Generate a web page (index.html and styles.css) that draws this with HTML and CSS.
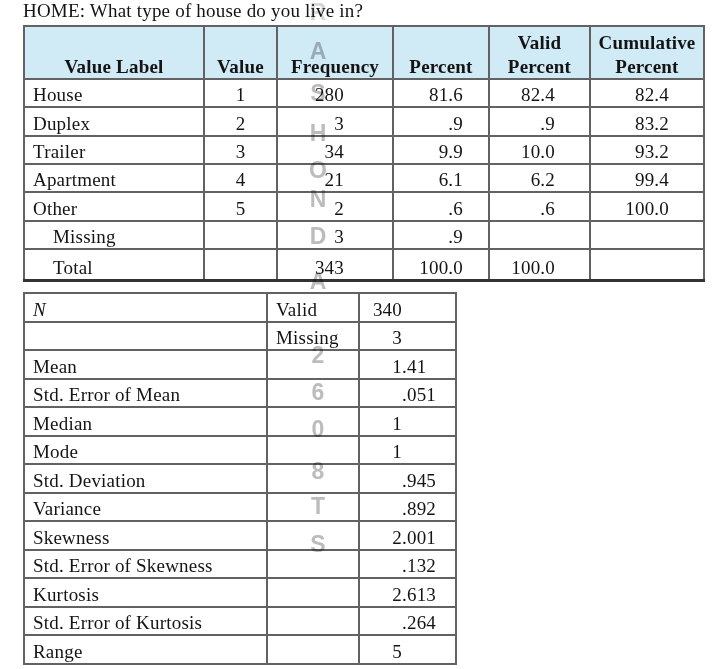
FILE: index.html
```html
<!DOCTYPE html>
<html>
<head>
<meta charset="utf-8">
<title>HOME frequencies</title>
<link rel="stylesheet" href="styles.css">
</head>
<body>
<div class="page">
  <div class="title">HOME: What type of house do you live in?</div>

  <table class="freq">
    <colgroup>
      <col class="f1"><col class="f2"><col class="f3"><col class="f4"><col class="f5"><col class="f6">
    </colgroup>
    <thead>
      <tr>
        <th>Value Label</th>
        <th>Value</th>
        <th>Frequency</th>
        <th>Percent</th>
        <th>Valid<br>Percent</th>
        <th>Cumulative<br>Percent</th>
      </tr>
    </thead>
    <tbody>
      <tr><td class="lbl">House</td><td class="ctr">1</td><td class="fq">280</td><td class="pc">81.6</td><td class="vp">82.4</td><td class="cp">82.4</td></tr>
      <tr><td class="lbl">Duplex</td><td class="ctr">2</td><td class="fq">3</td><td class="pc">.9</td><td class="vp">.9</td><td class="cp">83.2</td></tr>
      <tr><td class="lbl">Trailer</td><td class="ctr">3</td><td class="fq">34</td><td class="pc">9.9</td><td class="vp">10.0</td><td class="cp">93.2</td></tr>
      <tr><td class="lbl">Apartment</td><td class="ctr">4</td><td class="fq">21</td><td class="pc">6.1</td><td class="vp">6.2</td><td class="cp">99.4</td></tr>
      <tr><td class="lbl">Other</td><td class="ctr">5</td><td class="fq">2</td><td class="pc">.6</td><td class="vp">.6</td><td class="cp">100.0</td></tr>
      <tr><td class="lbl ind">Missing</td><td></td><td class="fq">3</td><td class="pc">.9</td><td></td><td></td></tr>
      <tr class="total"><td class="lbl ind">Total</td><td></td><td class="fq">343</td><td class="pc">100.0</td><td class="vp">100.0</td><td></td></tr>
    </tbody>
  </table>

  <table class="stats">
    <colgroup>
      <col class="s1"><col class="s2"><col class="s3">
    </colgroup>
    <tbody>
      <tr><td class="lbl"><i>N</i></td><td class="sub">Valid</td><td class="num"><span class="int">340</span></td></tr>
      <tr><td class="lbl"></td><td class="sub">Missing</td><td class="num"><span class="int">3</span></td></tr>
      <tr><td class="lbl">Mean</td><td></td><td class="num"><span class="int">1</span><span class="frac">.41</span></td></tr>
      <tr><td class="lbl">Std. Error of Mean</td><td></td><td class="num"><span class="int"></span><span class="frac">.051</span></td></tr>
      <tr><td class="lbl">Median</td><td></td><td class="num"><span class="int">1</span></td></tr>
      <tr><td class="lbl">Mode</td><td></td><td class="num"><span class="int">1</span></td></tr>
      <tr><td class="lbl">Std. Deviation</td><td></td><td class="num"><span class="int"></span><span class="frac">.945</span></td></tr>
      <tr><td class="lbl">Variance</td><td></td><td class="num"><span class="int"></span><span class="frac">.892</span></td></tr>
      <tr><td class="lbl">Skewness</td><td></td><td class="num"><span class="int">2</span><span class="frac">.001</span></td></tr>
      <tr><td class="lbl">Std. Error of Skewness</td><td></td><td class="num"><span class="int"></span><span class="frac">.132</span></td></tr>
      <tr><td class="lbl">Kurtosis</td><td></td><td class="num"><span class="int">2</span><span class="frac">.613</span></td></tr>
      <tr><td class="lbl">Std. Error of Kurtosis</td><td></td><td class="num"><span class="int"></span><span class="frac">.264</span></td></tr>
      <tr><td class="lbl">Range</td><td></td><td class="num"><span class="int">5</span></td></tr>
    </tbody>
  </table>

  <div class="watermark" aria-hidden="true">
    <span>R</span><span>A</span><span>S</span><span>H</span><span>O</span><span>N</span><span>D</span><span>A</span><span>2</span><span>6</span><span>0</span><span>8</span><span>T</span><span>S</span>
  </div>
</div>
</body>
</html>
```

FILE: styles.css
```css
* { box-sizing: border-box; }

html, body {
  margin: 0;
  padding: 0;
  background: #ffffff;
}

body {
  font-family: "Liberation Serif", "Times New Roman", serif;
  font-size: 19px;
  letter-spacing: 0.2px;
  color: #141414;
}

.page {
  position: relative;
  width: 720px;
  height: 669px;
  padding-left: 23px;
  overflow: hidden;
}

.title {
  height: 25px;
  line-height: 22px;
  white-space: nowrap;
}

table {
  border-collapse: collapse;
  table-layout: fixed;
}

td, th {
  border: 2px solid #626262;
  padding: 0;
  line-height: 22px;
  vertical-align: bottom;
  white-space: nowrap;
}

/* Frequency table */
.freq { width: 680px; }
.f1 { width: 180px; }
.f2 { width: 73px; }
.f3 { width: 116px; }
.f4 { width: 96px; }
.f5 { width: 101px; }
.f6 { width: 114px; }

.freq th {
  background: #d0eaf6;
  height: 53px;
  line-height: 23.5px;
  font-weight: bold;
  text-align: center;
  padding-bottom: 0;
}

.freq td { height: 28.33px; }
.freq .total td {
  height: 32px;
  border-bottom: 3px solid #333333;
}

.lbl { padding-left: 8px; text-align: left; }
.ind { padding-left: 28px; }
.ctr { text-align: center; }
.fq { text-align: right; padding-right: 48px; }
.pc { text-align: right; padding-right: 25px; }
.vp { text-align: right; padding-right: 34px; }
.cp { text-align: right; padding-right: 34px; }

/* Statistics table */
.stats {
  width: 432px;
  margin-top: 10px;
}
.s1 { width: 243px; }
.s2 { width: 92px; }
.s3 { width: 97px; }

.stats td { height: 28.5px; }
.sub { padding-left: 8px; }
.num { padding-left: 0; }
.int {
  display: inline-block;
  width: 42px;
  text-align: right;
}

/* Watermark overlay */
.watermark {
  position: absolute;
  left: 307px;
  top: 0;
  width: 22px;
  display: flex;
  flex-direction: column;
  align-items: center;
  font-family: "Liberation Sans", Arial, sans-serif;
  font-weight: bold;
  font-size: 23px;
  line-height: 17px;
  color: #bcbcbc;
  mix-blend-mode: multiply;
  letter-spacing: 0;
  pointer-events: none;
}
.watermark span { display: block; height: 17px; }
.watermark span:nth-child(1) { margin-top: 4px; color: #d6d6d6; }
.watermark span:nth-child(2) { margin-top: 22px; }
.watermark span:nth-child(3) { margin-top: 25px; }
.watermark span:nth-child(4) { margin-top: 23px; }
.watermark span:nth-child(5) { margin-top: 20px; }
.watermark span:nth-child(6) { margin-top: 12px; }
.watermark span:nth-child(7) { margin-top: 20px; }
.watermark span:nth-child(8) { margin-top: 28px; }
.watermark span:nth-child(9) { margin-top: 57px; }
.watermark span:nth-child(10) { margin-top: 20px; }
.watermark span:nth-child(11) { margin-top: 20px; }
.watermark span:nth-child(12) { margin-top: 25px; }
.watermark span:nth-child(13) { margin-top: 18px; }
.watermark span:nth-child(14) { margin-top: 21px; }
```
